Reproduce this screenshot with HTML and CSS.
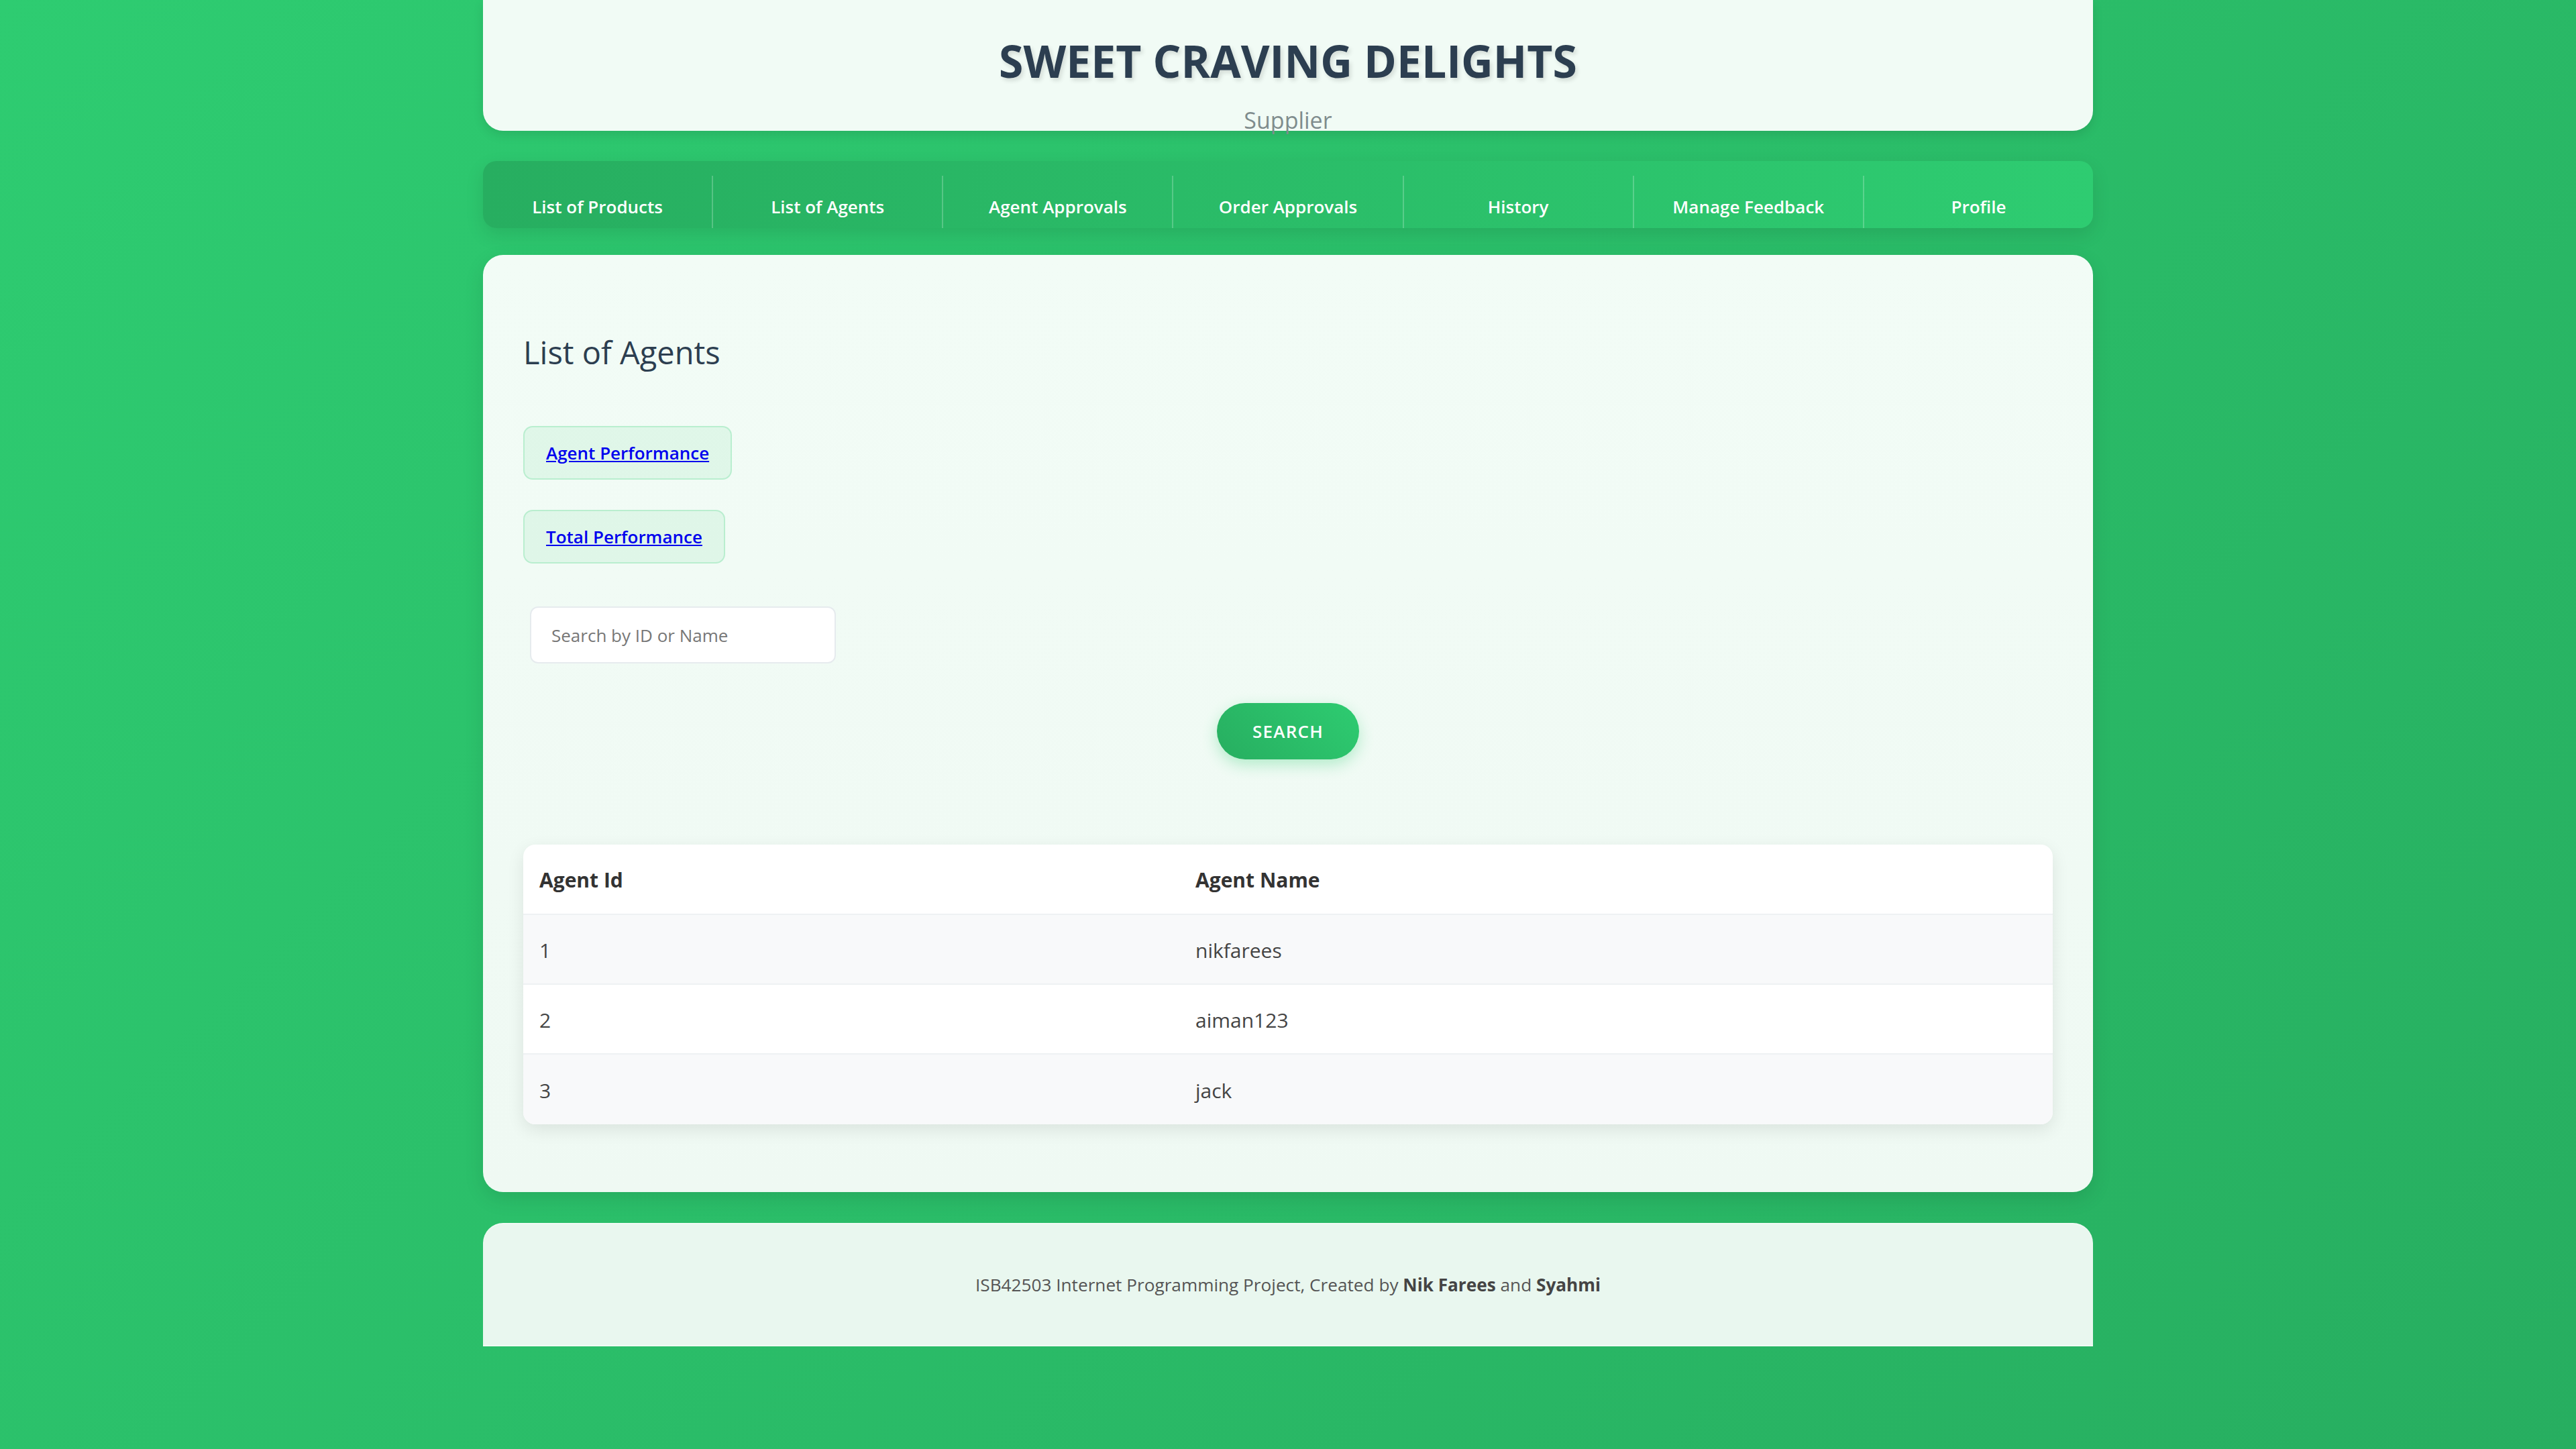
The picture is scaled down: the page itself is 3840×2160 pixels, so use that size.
FILE: index.html
```html
<!DOCTYPE html>
<html lang="en">
<head>
<meta charset="utf-8">
<title>Sweet Craving Delights - List of Agents</title>
<link rel="stylesheet" href="styles.css">
</head>
<body>
<div class="page">
  <header class="site-header">
    <h1 class="brand">SWEET CRAVING DELIGHTS</h1>
    <p class="role">Supplier</p>
  </header>

  <nav class="main-nav">
    <a class="nav-item" href="#">List of Products</a>
    <a class="nav-item" href="#">List of Agents</a>
    <a class="nav-item" href="#">Agent Approvals</a>
    <a class="nav-item" href="#">Order Approvals</a>
    <a class="nav-item" href="#">History</a>
    <a class="nav-item" href="#">Manage Feedback</a>
    <a class="nav-item" href="#">Profile</a>
  </nav>

  <main class="content-card">
    <h2 class="section-title">List of Agents</h2>

    <div class="link-list">
      <div class="link-box"><a href="#">Agent Performance</a></div>
      <div class="link-box"><a href="#">Total Performance</a></div>
    </div>

    <form class="search-form">
      <input class="search-input" type="text" placeholder="Search by ID or Name">
      <div class="search-actions">
        <button class="search-btn" type="button">Search</button>
      </div>
    </form>

    <table class="agent-table">
      <thead>
        <tr><th class="col-id">Agent Id</th><th>Agent Name</th></tr>
      </thead>
      <tbody>
        <tr><td>1</td><td>nikfarees</td></tr>
        <tr><td>2</td><td>aiman123</td></tr>
        <tr><td>3</td><td>jack</td></tr>
      </tbody>
    </table>
  </main>

  <footer class="site-footer">
    <p>ISB42503 Internet Programming Project, Created by <strong>Nik Farees</strong> and <strong>Syahmi</strong></p>
  </footer>
</div>
</body>
</html>
```

FILE: styles.css
```css
* { box-sizing: border-box; }

html, body {
  margin: 0;
  padding: 0;
}

body {
  min-height: 2160px;
  font-family: "Open Sans", "Noto Sans", "Liberation Sans", sans-serif;
  background: linear-gradient(135deg, #2ecc71 0%, #27ae60 100%);
  color: #333;
}

.page {
  width: 2400px;
  margin: 0 auto;
}

/* Header */
.site-header {
  height: 195px;
  padding-top: 50px;
  background: #f1fbf5;
  border-radius: 0 0 30px 30px;
  box-shadow: 0 6px 16px rgba(0, 0, 0, 0.10);
  text-align: center;
}

.brand {
  margin: 0;
  font-size: 66px;
  line-height: 80px;
  font-weight: 700;
  color: #2c3e50;
  text-shadow: 3px 4px 6px rgba(0, 0, 0, 0.12);
}

.role {
  margin: 26px 0 0;
  font-size: 34px;
  line-height: 46px;
  color: #7f8c8d;
}

/* Navigation */
.main-nav {
  display: flex;
  margin-top: 45px;
  height: 100px;
  padding-top: 22px;
  border-radius: 20px;
  background: linear-gradient(90deg, #27ae60 0%, #2ecc71 100%);
  box-shadow: 0 10px 28px rgba(0, 0, 0, 0.10);
}

.nav-item {
  flex: 1;
  padding-top: 14px;
  line-height: 64px;
  text-align: center;
  font-size: 26px;
  font-weight: 600;
  color: #ffffff;
  text-decoration: none;
  border-right: 2px solid rgba(255, 255, 255, 0.22);
}

.nav-item:last-child { border-right: none; }

/* Main card */
.content-card {
  display: block;
  margin-top: 40px;
  padding: 60px 60px 60px;
  border-radius: 30px;
  background: linear-gradient(180deg, #f2fcf6 0%, #eff9f3 100%);
  box-shadow: 0 10px 30px rgba(0, 0, 0, 0.10);
}

.section-title {
  margin: 53px 0 0;
  font-size: 47px;
  line-height: 64px;
  font-weight: 500;
  color: #2c3e50;
}

.link-list {
  display: flex;
  flex-direction: column;
  align-items: flex-start;
  gap: 45px;
  margin-top: 78px;
}

.link-box {
  height: 80px;
  padding: 0 32px;
  line-height: 76px;
  border: 2px solid rgba(46, 204, 113, 0.22);
  border-radius: 14px;
  background: rgba(46, 204, 113, 0.09);
}

.link-box a {
  font-size: 26px;
  font-weight: 600;
  color: #0000ee;
  text-decoration: underline;
}

/* Search */
.search-form {
  margin-top: 64px;
}

.search-input {
  display: block;
  width: 456px;
  height: 85px;
  margin-left: 10px;
  padding: 0 30px;
  font-family: inherit;
  font-size: 26px;
  color: #333;
  background: #ffffff;
  border: 2px solid #e6ebee;
  border-radius: 12px;
  outline: none;
}

.search-input::placeholder { color: #777; }

.search-actions {
  display: flex;
  justify-content: center;
  margin-top: 59px;
}

.search-btn {
  width: 212px;
  height: 84px;
  font-family: inherit;
  font-size: 26px;
  font-weight: 600;
  letter-spacing: 1.2px;
  text-transform: uppercase;
  color: #ffffff;
  border: none;
  border-radius: 42px;
  background: linear-gradient(45deg, #27ae60 0%, #2ecc71 100%);
  box-shadow: 0 8px 22px rgba(46, 204, 113, 0.32);
}

/* Table */
.agent-table {
  width: 100%;
  margin: 127px 0 41px;
  border-collapse: separate;
  border-spacing: 0;
  background: #ffffff;
  border-radius: 18px;
  overflow: hidden;
  box-shadow: 0 8px 26px rgba(0, 0, 0, 0.09);
}

.agent-table th,
.agent-table td {
  height: 105px;
  padding: 2px 24px 0;
  text-align: left;
  font-size: 30px;
  border-bottom: 2px solid #eef1f3;
}

.agent-table th {
  font-weight: 700;
  color: #333;
}

.agent-table .col-id { width: 978px; }

.agent-table td {
  color: #444;
  height: 104px;
}

.agent-table tbody tr:nth-child(odd) td { background: #f8f9fa; }

.agent-table tbody tr:last-child td { border-bottom: none; }

/* Footer */
.site-footer {
  display: flex;
  align-items: center;
  justify-content: center;
  height: 184px;
  margin-top: 46px;
  background: #e9f7ef;
  border-top: 2px solid rgba(255, 255, 255, 0.35);
  border-bottom: 2px solid rgba(255, 255, 255, 0.35);
  border-radius: 30px 30px 0 0;
}

.site-footer p {
  margin: 0;
  font-size: 26.2px;
  line-height: 36px;
  color: #555;
}

.site-footer strong {
  font-weight: 700;
  color: #444;
}
```
